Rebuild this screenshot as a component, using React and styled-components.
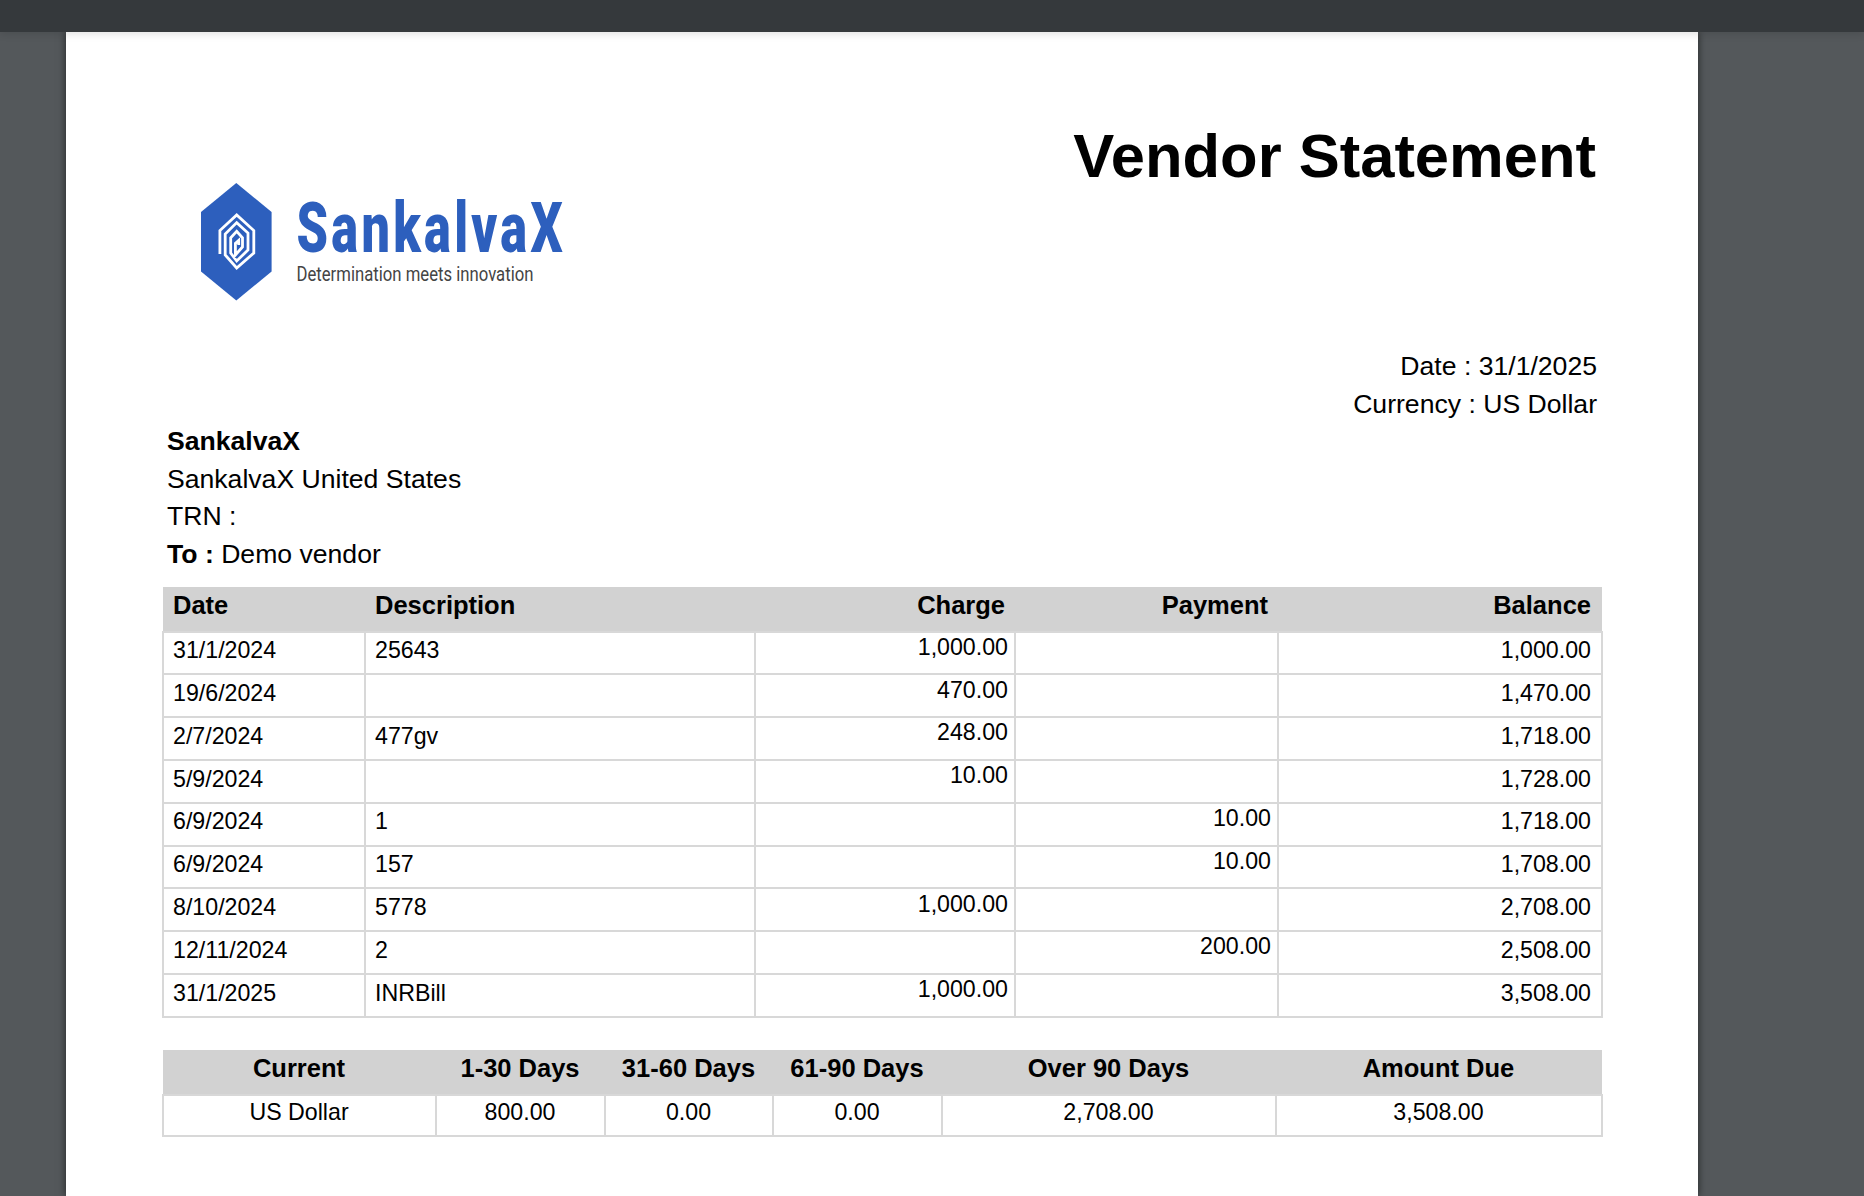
import React from "react";
import styled, { createGlobalStyle } from "styled-components";

const GlobalStyle = createGlobalStyle`
  html, body {
    margin: 0;
    padding: 0;
    height: 100%;
    overflow: hidden;
    background: #54585b;
  }
  body {
    font-family: "Liberation Sans", Arial, sans-serif;
    color: #000;
  }
`;

const Viewer = styled.div`
  width: 1864px;
  height: 1196px;
  overflow: hidden;
  background: #54585b;
`;

const TopBar = styled.div`
  position: relative;
  z-index: 1;
  height: 32px;
  background: #35393c;
  box-shadow: 0 2px 8px rgba(0, 0, 0, 0.12);
`;

const Sheet = styled.div`
  box-sizing: border-box;
  width: 1632px;
  height: 1164px;
  margin-left: 66px;
  padding: 0 96px 0 96px;
  background: #fff;
  box-shadow: 0 0 8px rgba(0, 0, 0, 0.6);
`;

const Header = styled.div`
  display: flex;
  justify-content: space-between;
  align-items: flex-start;
  height: 310px;
`;

const LogoWrap = styled.div`
  padding: 151px 0 0 39px;
`;

const Title = styled.h1`
  margin: 89px 6px 0 0;
  font-size: 61.5px;
  line-height: 70px;
  font-weight: 700;
`;

const Info = styled.div`
  font-size: 26.6px;
  line-height: 37.6px;
  padding: 6px 0 13px 5px;
`;

const MetaLine = styled.div`
  text-align: right;
  padding-right: 5px;
`;

const Strong = styled.span`
  font-weight: 700;
`;

const Table = styled.table`
  box-sizing: border-box;
  width: 1439px;
  table-layout: fixed;
  border-collapse: collapse;
  font-size: 23.2px;
`;

const HeadCell = styled.th`
  box-sizing: border-box;
  height: 45px;
  padding: 0 ${(p) => p.$right || 11}px 7px 10px;
  background: #d2d2d2;
  font-weight: 700;
  font-size: 25.5px;
  text-align: ${(p) => p.$align || "left"};
`;

const Cell = styled.td`
  box-sizing: border-box;
  height: ${(p) => p.$height || 42.8}px;
  padding: 0 ${(p) => p.$right || 10}px ${(p) => p.$lift || 4.4}px 9px;
  border: 2.4px solid #d8d8d8;
  text-align: ${(p) => p.$align || "left"};
  vertical-align: middle;
  line-height: 1;
`;

const SummaryTable = styled(Table)`
  margin-top: 32px;
`;

const statementCols = [202, 390, 260, 263, 324];
const summaryCols = [273, 169, 168, 169, 334, 326];

const rows = [
  ["31/1/2024", "25643", "1,000.00", "", "1,000.00"],
  ["19/6/2024", "", "470.00", "", "1,470.00"],
  ["2/7/2024", "477gv", "248.00", "", "1,718.00"],
  ["5/9/2024", "", "10.00", "", "1,728.00"],
  ["6/9/2024", "1", "", "10.00", "1,718.00"],
  ["6/9/2024", "157", "", "10.00", "1,708.00"],
  ["8/10/2024", "5778", "1,000.00", "", "2,708.00"],
  ["12/11/2024", "2", "", "200.00", "2,508.00"],
  ["31/1/2025", "INRBill", "1,000.00", "", "3,508.00"],
];

const summaryHeads = ["Current", "1-30 Days", "31-60 Days", "61-90 Days", "Over 90 Days", "Amount Due"];
const summaryValues = ["US Dollar", "800.00", "0.00", "0.00", "2,708.00", "3,508.00"];

function Logo() {
  return (
    <svg width="380" height="120" viewBox="0 0 380 120" style={{ display: "block" }}>
      <polygon points="35.3,0 70.6,29 70.6,88.5 35.3,117.5 0,88.5 0,29" fill="#2d5fbd" />
      <path
        d="M18.9 71 V47.5 L35.7 32 L52.8 47.5 V70 L35.7 85 L24.2 72 V51 L35.7 39.6 L47 50 V67 L35.7 78 L29.7 70 V54.7 L35.7 48.3 L41.5 54.7 V64 L34.4 72 V60.4 L37.7 57.4 V62"
        fill="none"
        stroke="#fff"
        strokeWidth="2.8"
      />
      <text transform="translate(95.5 69) scale(0.72 1)" fontFamily="Roboto, sans-serif" fontWeight="900" fontSize="70" letterSpacing="4.6" fill="#2d5fbd">
        SankalvaX
      </text>
      <text transform="translate(95.5 98) scale(0.795 1)" fontFamily="Roboto, sans-serif" fontWeight="400" fontSize="21" fill="#444">
        Determination meets innovation
      </text>
    </svg>
  );
}

export default function App() {
  return (
    <Viewer>
      <GlobalStyle />
      <TopBar />
      <Sheet>
        <Header>
          <LogoWrap>
            <Logo />
          </LogoWrap>
          <Title>Vendor Statement</Title>
        </Header>
        <Info>
          <MetaLine>Date : 31/1/2025</MetaLine>
          <MetaLine>Currency : US Dollar</MetaLine>
          <div>
            <Strong>SankalvaX</Strong>
          </div>
          <div>SankalvaX United States</div>
          <div>TRN :</div>
          <div>
            <Strong>To :</Strong> Demo vendor
          </div>
        </Info>
        <Table>
          <colgroup>
            {statementCols.map((w, i) => (
              <col key={i} style={{ width: w }} />
            ))}
          </colgroup>
          <thead>
            <tr>
              <HeadCell>Date</HeadCell>
              <HeadCell>Description</HeadCell>
              <HeadCell $align="right" $right={10}>Charge</HeadCell>
              <HeadCell $align="right" $right={10}>Payment</HeadCell>
              <HeadCell $align="right">Balance</HeadCell>
            </tr>
          </thead>
          <tbody>
            {rows.map((row, i) => (
              <tr key={i}>
                <Cell>{row[0]}</Cell>
                <Cell>{row[1]}</Cell>
                <Cell $align="right" $right={6} $lift={11}>{row[2]}</Cell>
                <Cell $align="right" $right={6} $lift={11}>{row[3]}</Cell>
                <Cell $align="right">{row[4]}</Cell>
              </tr>
            ))}
          </tbody>
        </Table>
        <SummaryTable>
          <colgroup>
            {summaryCols.map((w, i) => (
              <col key={i} style={{ width: w }} />
            ))}
          </colgroup>
          <thead>
            <tr>
              {summaryHeads.map((h) => (
                <HeadCell key={h} $align="center">{h}</HeadCell>
              ))}
            </tr>
          </thead>
          <tbody>
            <tr>
              {summaryValues.map((v, i) => (
                <Cell key={i} $align="center" $height={41} $lift={5}>{v}</Cell>
              ))}
            </tr>
          </tbody>
        </SummaryTable>
      </Sheet>
    </Viewer>
  );
}
